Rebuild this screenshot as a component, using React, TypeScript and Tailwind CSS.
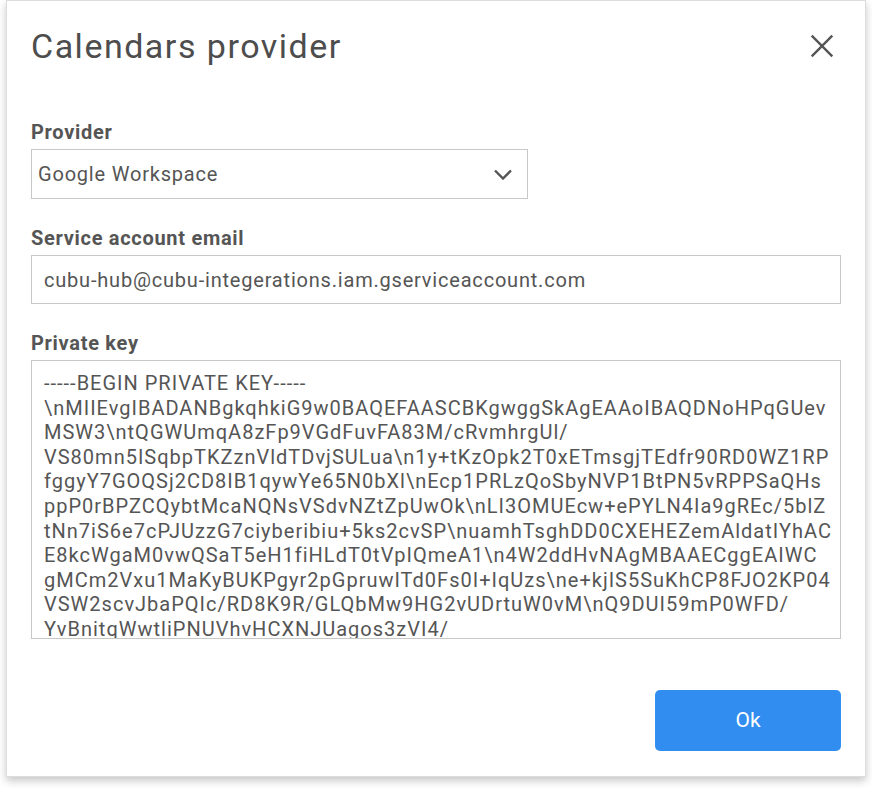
const keyLines = [
  '-----BEGIN PRIVATE KEY-----',
  '\\nMIIEvgIBADANBgkqhkiG9w0BAQEFAASCBKgwggSkAgEAAoIBAQDNoHPqGUev',
  'MSW3\\ntQGWUmqA8zFp9VGdFuvFA83M/cRvmhrgUl/',
  'VS80mn5ISqbpTKZznVldTDvjSULua\\n1y+tKzOpk2T0xETmsgjTEdfr90RD0WZ1RP',
  'fggyY7GOQSj2CD8IB1qywYe65N0bXl\\nEcp1PRLzQoSbyNVP1BtPN5vRPPSaQHs',
  'ppP0rBPZCQybtMcaNQNsVSdvNZtZpUwOk\\nLI3OMUEcw+ePYLN4Ia9gREc/5blZ',
  'tNn7iS6e7cPJUzzG7ciyberibiu+5ks2cvSP\\nuamhTsghDD0CXEHEZemAldatIYhAC',
  'E8kcWgaM0vwQSaT5eH1fiHLdT0tVpIQmeA1\\n4W2ddHvNAgMBAAECggEAIWC',
  'gMCm2Vxu1MaKyBUKPgyr2pGpruwITd0Fs0I+IqUzs\\ne+kjIS5SuKhCP8FJO2KP04',
  'VSW2scvJbaPQIc/RD8K9R/GLQbMw9HG2vUDrtuW0vM\\nQ9DUI59mP0WFD/',
  'YvBnitqWwtliPNUVhvHCXNJUagos3zVI4/',
];

const Label = ({ children }: { children: React.ReactNode }) => (
  <label className="block text-[20px] leading-[22px] tracking-[0.7px] font-bold text-[#555] mb-[6px]">{children}</label>
);

export default function App() {
  return (
    <div className="min-h-screen bg-white font-['Roboto',sans-serif]">
      <div className="ml-[6px] w-[860px] h-[777px] bg-white border border-[#dcdcdc] shadow-[0_4px_8px_rgba(0,0,0,0.22)] px-[24px] pt-[25px] pb-[25px] flex flex-col">
        {/* Header */}
        <div className="flex items-center justify-between h-[40px]">
          <h1 className="text-[34px] leading-[40px] tracking-[1.5px] font-normal text-[#4d4d4d]">Calendars provider</h1>
          <button className="w-[38px] h-[38px] flex items-center justify-center text-[#555]" aria-label="Close">
            <svg viewBox="0 0 24 24" className="w-[38px] h-[38px]" fill="none" stroke="currentColor" strokeWidth="1.5">
              <path d="M5.5 5.5l13 13M18.5 5.5l-13 13" />
            </svg>
          </button>
        </div>

        {/* Provider */}
        <div className="mt-[55px]">
          <Label>Provider</Label>
          <div className="w-[497px] h-[50px] border border-[#c8c8c8] flex items-center justify-between pl-[6px] pr-[15px]">
            <span className="text-[20px] tracking-[0.8px] text-[#555]">Google Workspace</span>
            <svg viewBox="0 0 18 11" className="w-[18px] h-[11px] text-[#555]" fill="none" stroke="currentColor" strokeWidth="2.4">
              <path d="M1 1.5l8 8 8-8" />
            </svg>
          </div>
        </div>

        {/* Service account email */}
        <div className="mt-[28px]">
          <Label>Service account email</Label>
          <div className="h-[49px] border border-[#c8c8c8] flex items-center px-[12px]">
            <span className="text-[20px] tracking-[0.8px] text-[#555]">cubu-hub@cubu-integerations.iam.gserviceaccount.com</span>
          </div>
        </div>

        {/* Private key */}
        <div className="mt-[28px]">
          <Label>Private key</Label>
          <div className="h-[279px] border border-[#c8c8c8] overflow-hidden pl-[12px] pt-[10px]">
            {keyLines.map((l, i) => (
              <div key={i} className="whitespace-nowrap text-[20px] leading-[24.6px] tracking-[1px] text-[#555]">{l}</div>
            ))}
          </div>
        </div>

        <div className="mt-auto flex justify-end">
          <button className="w-[186px] h-[61px] rounded-[5px] bg-[#318ef0] text-white text-[21px]">Ok</button>
        </div>
      </div>
    </div>
  );
}
